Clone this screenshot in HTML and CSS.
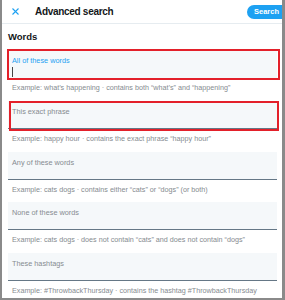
FILE: index.html
```html
<!DOCTYPE html>
<html>
<head>
<meta charset="utf-8">
<link rel="stylesheet" href="styles.css">
</head>
<body>
<div class="page">
  <header class="header">
    <svg class="close" width="7" height="7" viewBox="0 0 7 7"><path d="M0.5 0.5L6.5 6.5M6.5 0.5L0.5 6.5" stroke="#1da1f2" stroke-width="1.1" fill="none"/></svg>
    <h1 class="title">Advanced search</h1>
    <button class="search">Search</button>
  </header>
  <main class="main">
    <h2 class="section">Words</h2>
    <div class="group">
      <div class="field active mark mark-1">
        <span class="label">All of these words</span>
        <span class="cursor"></span>
      </div>
      <p class="example">Example: what’s happening · contains both “what’s” and “happening”</p>
    </div>
    <div class="group">
      <div class="field mark mark-2">
        <span class="label">This exact phrase</span>
      </div>
      <p class="example">Example: happy hour · contains the exact phrase “happy hour”</p>
    </div>
    <div class="group">
      <div class="field">
        <span class="label">Any of these words</span>
      </div>
      <p class="example">Example: cats dogs · contains either “cats” or “dogs” (or both)</p>
    </div>
    <div class="group">
      <div class="field">
        <span class="label">None of these words</span>
      </div>
      <p class="example">Example: cats dogs · does not contain “cats” and does not contain “dogs”</p>
    </div>
    <div class="group">
      <div class="field">
        <span class="label">These hashtags</span>
      </div>
      <p class="example">Example: #ThrowbackThursday · contains the hashtag #ThrowbackThursday</p>
    </div>
  </main>
</div>
</body>
</html>
```
FILE: styles.css
```css
* { box-sizing: border-box; }
html, body { margin: 0; padding: 0; background: #fff; }
body { font-family: "Liberation Sans", Arial, sans-serif; color: #14171a; }

.page {
  width: 285px;
  height: 300px;
  border-left: 2px solid #8a8a8a;
  border-right: 3px solid #8a8a8a;
  border-bottom: 2px solid #8a8a8a;
  overflow: hidden;
  background: #fff;
}

.header {
  display: flex;
  align-items: center;
  height: 24px;
  border-bottom: 1px solid #e6ecf0;
  padding-left: 10px;
}
.close { display: block; flex: none; }
.title {
  margin: 0 0 0 16px;
  font-size: 10px;
  letter-spacing: -0.3px;
  font-weight: bold;
  line-height: 12px;
}
.search {
  margin-left: auto;
  margin-right: -10px;
  height: 14px;
  width: 45px;
  padding: 0 0 0 7px;
  text-align: left;
  border: none;
  border-radius: 7px;
  background: #1da1f2;
  color: #fff;
  font-family: "Liberation Sans", Arial, sans-serif;
  font-weight: bold;
  font-size: 7.5px;
}

.main { padding: 7px 5px 0 6px; }
.section {
  margin: 0 0 7px;
  font-size: 9.5px;
  line-height: 12px;
  font-weight: bold;
}

.group { margin-bottom: 8.75px; }
.field {
  position: relative;
  height: 28px;
  background: #f5f8fa;
  border-bottom: 1px solid #657786;
  padding: 6px 4px 0;
}
.field.active { border-bottom-color: #f5f8fa; }
.label {
  display: block;
  font-size: 7.3px;
  line-height: 9px;
  color: #868b90;
}
.active .label { color: #1da1f2; }
.cursor {
  display: block;
  width: 1px;
  height: 10px;
  margin-top: 2px;
  background: #444;
}
.mark::after {
  content: "";
  position: absolute;
  border: 2px solid #e3202a;
}
.mark-1::after { inset: -1px -3px -3px -1px; }
.mark-2::after { inset: 0 -2px -3px 1px; }

.example {
  margin: 5px 0 0 4px;
  font-size: 7.2px;
  line-height: 9px;
  color: #868b90;
}
```
